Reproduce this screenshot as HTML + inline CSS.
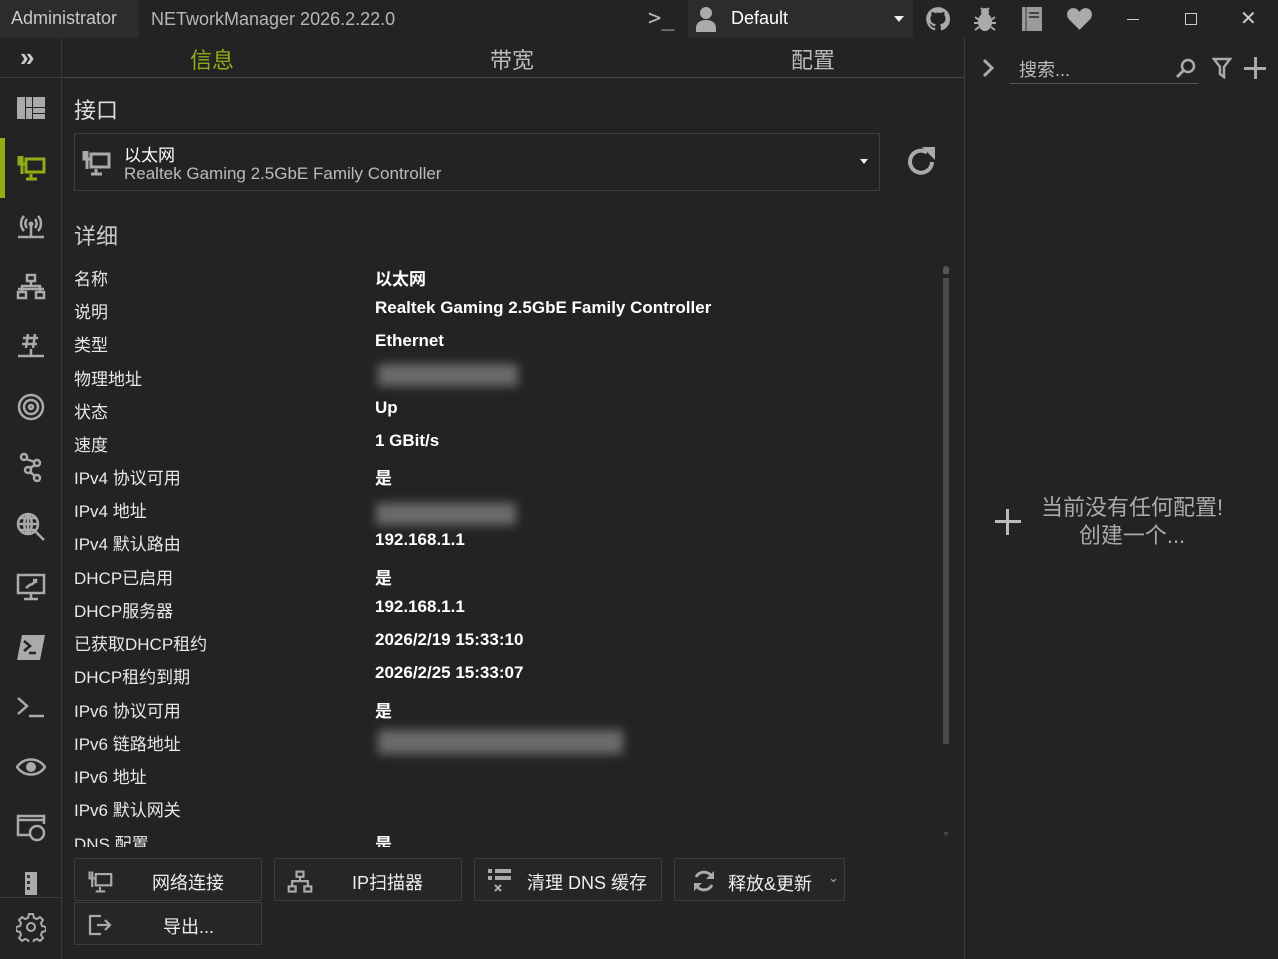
<!DOCTYPE html>
<html><head><meta charset="utf-8"><style>
*{margin:0;padding:0;box-sizing:border-box}
body{width:1278px;height:959px;background:#232323;color:#ddd;font-family:"Liberation Sans","Noto Sans CJK SC",sans-serif;position:relative;overflow:hidden}
.a{position:absolute}
.t{font-size:18px;color:#c8c8c8}
.lbl{position:absolute;left:74px;font-size:17px;color:#e8e8e8}
.val{position:absolute;left:375px;font-size:17px;color:#fff;font-weight:bold}
.ic{position:absolute;left:16px;width:30px;height:30px}
.btn{position:absolute;border:1px solid #3c3c3c;background:#262626;height:43px;font-size:18px;color:#eee}
.blur{position:absolute;background:#8a8a8a;filter:blur(5px);opacity:.7}
</style></head><body>
<!-- title bar -->
<div class="a" style="left:0;top:0;width:139px;height:38px;background:#2c2c2c"></div>
<div class="a t" style="left:11px;top:8px;color:#c8c8c8">Administrator</div>
<div class="a t" style="left:151px;top:9px;color:#b8b8b8">NETworkManager 2026.2.22.0</div>
<div class="a t" style="left:648px;top:6px;font-size:22px;color:#bbb;font-family:'DejaVu Sans Mono'">&gt;_</div>
<div class="a" style="left:688px;top:0;width:225px;height:38px;background:#2c2c2c"></div>
<svg class="a" style="left:694px;top:4px" width="24" height="28" viewBox="0 0 24 28"><circle cx="12" cy="9" r="6" fill="#aaa"/><path d="M2 28v-4c0-5 4-8 10-8s10 3 10 8v4z" fill="#aaa"/></svg>
<div class="a t" style="left:731px;top:8px;color:#fff;font-size:18px">Default</div>
<div class="a" style="left:894px;top:16px;border-left:5px solid transparent;border-right:5px solid transparent;border-top:6px solid #eee"></div>
<svg class="a" style="left:925px;top:6px" width="26" height="26" viewBox="0 0 24 24"><path fill="#aaa" d="M12 1a11 11 0 0 0-3.5 21.4c.6.1.8-.2.8-.5v-2c-3.1.7-3.7-1.4-3.7-1.4-.5-1.3-1.2-1.6-1.2-1.6-1-.7.1-.7.1-.7 1.1.1 1.7 1.1 1.7 1.1 1 1.7 2.6 1.2 3.2.9.1-.7.4-1.2.7-1.5-2.5-.3-5.1-1.2-5.1-5.4 0-1.2.4-2.2 1.1-3-.1-.3-.5-1.4.1-2.9 0 0 .9-.3 3 1.1a10 10 0 0 1 5.5 0c2.1-1.4 3-1.1 3-1.1.6 1.5.2 2.6.1 2.9.7.8 1.1 1.8 1.1 3 0 4.2-2.6 5.1-5.1 5.4.4.4.8 1.1.8 2.1v3.2c0 .3.2.6.8.5A11 11 0 0 0 12 1z"/></svg>
<svg class="a" style="left:972px;top:5px" width="26" height="28" viewBox="0 0 26 28"><ellipse cx="13" cy="17" rx="7" ry="9" fill="#aaa"/><circle cx="13" cy="7" r="4" fill="#aaa"/><path d="M3 12l4 3M23 12l-4 3M2 18h5M24 18h-5M3 25l4-3M23 25l-4-3M9 3l2 2M17 3l-2 2" stroke="#aaa" stroke-width="2"/></svg>
<svg class="a" style="left:1021px;top:6px" width="22" height="26" viewBox="0 0 22 26"><rect x="1" y="1" width="20" height="24" fill="#9a9a9a"/><rect x="4" y="1" width="2" height="24" fill="#6a6a6a"/><rect x="8" y="6" width="10" height="2" fill="#444"/><rect x="8" y="10" width="10" height="2" fill="#444"/></svg>
<svg class="a" style="left:1066px;top:7px" width="27" height="24" viewBox="0 0 24 22"><path fill="#aaa" d="M12 21 2 11C-1 7 1 1 6.5 1 9 1 11 3 12 4.5 13 3 15 1 17.5 1 23 1 25 7 22 11z"/></svg>
<div class="a" style="left:1127px;top:19px;width:12px;height:1px;background:#ccc"></div>
<div class="a" style="left:1185px;top:13px;width:12px;height:12px;border:1px solid #ccc"></div>
<div class="a" style="left:1240px;top:6px;font-size:20px;color:#ccc">✕</div>

<!-- sidebar -->
<div class="a" style="left:61px;top:38px;width:1px;height:921px;background:#3a3a3a"></div>
<div class="a" style="left:0;top:77px;width:61px;height:1px;background:#3a3a3a"></div>
<div class="a" style="left:20px;top:42px;font-size:26px;color:#ccc;font-weight:bold;letter-spacing:-4px">»</div>
<div class="a" style="left:0;top:138px;width:5px;height:60px;background:#8fad15"></div>
<svg class="ic" style="top:93px" viewBox="0 0 30 30"><g fill="#aaa"><rect x="1" y="4" width="8" height="22"/><rect x="10" y="4" width="6" height="10"/><rect x="10" y="15" width="6" height="11"/><rect x="17" y="4" width="12" height="10"/><rect x="17" y="15" width="12" height="5"/><rect x="17" y="21" width="12" height="5"/></g></svg>
<svg class="ic" style="top:152px" viewBox="0 0 30 30"><g fill="none" stroke="#8fad15" stroke-width="3"><rect x="10" y="7" width="18" height="13"/><path d="M3 4v8h6M6 4v8M6 12v10M15 22v4M10 27h11"/></g></svg>
<svg class="ic" style="top:212px" viewBox="0 0 30 30"><g fill="none" stroke="#aaa" stroke-width="2.5"><path d="M8 4a11 11 0 0 0 0 15M22 4a11 11 0 0 1 0 15M11 7a7 7 0 0 0 0 9M19 7a7 7 0 0 1 0 9M15 13v12M2 25h26"/></g><circle cx="15" cy="12" r="2.5" fill="#aaa"/></svg>
<svg class="ic" style="top:272px" viewBox="0 0 30 30"><g fill="none" stroke="#aaa" stroke-width="2.5"><rect x="11" y="3" width="8" height="6"/><rect x="2" y="20" width="8" height="6"/><rect x="20" y="20" width="8" height="6"/><path d="M15 9v5M6 20v-6h18v6M2 17h26"/></g></svg>
<svg class="ic" style="top:332px" viewBox="0 0 30 30"><g fill="none" stroke="#aaa" stroke-width="2.5"><path d="M12 2l-2 14M19 2l-2 14M7 6h15M6 12h15M15 17v6M2 24h26"/></g></svg>
<svg class="ic" style="top:392px" viewBox="0 0 30 30"><g fill="none" stroke="#aaa" stroke-width="2.5"><circle cx="15" cy="15" r="12"/><circle cx="15" cy="15" r="7"/><circle cx="15" cy="15" r="2"/></g></svg>
<svg class="ic" style="top:452px" viewBox="0 0 30 30"><g fill="none" stroke="#aaa" stroke-width="2.5"><circle cx="8" cy="5" r="3"/><circle cx="21" cy="11" r="3"/><circle cx="12" cy="18" r="3"/><circle cx="21" cy="26" r="3"/><path d="M10 7l9 3M19 13l-5 3M14 20l5 4"/></g></svg>
<svg class="ic" style="top:512px" viewBox="0 0 30 30"><g fill="none" stroke="#aaa" stroke-width="2.5"><circle cx="12" cy="12" r="10"/><path d="M2 12h20M12 2v20M5 6h14M5 18h14M12 2c-5 5-5 15 0 20M12 2c5 5 5 15 0 20M19 19l9 9"/></g></svg>
<svg class="ic" style="top:572px" viewBox="0 0 30 30"><g fill="none" stroke="#aaa" stroke-width="2.5"><rect x="2" y="3" width="26" height="18"/><path d="M15 21v5M8 27h14M10 16l5-4M20 9l-5 4M17 8h3v3"/></g></svg>
<svg class="ic" style="top:632px" viewBox="0 0 30 30"><path d="M6 3h23l-5 25H1z" fill="#aaa"/><path d="M8 9l6 5-6 5M13 21h7" stroke="#222" stroke-width="2.5" fill="none"/></svg>
<svg class="ic" style="top:692px" viewBox="0 0 30 30"><path d="M2 6l9 8-9 8M13 24h15" stroke="#aaa" stroke-width="2.5" fill="none"/></svg>
<svg class="ic" style="top:752px" viewBox="0 0 30 30"><path d="M1 15c7-10 21-10 28 0-7 10-21 10-28 0z" stroke="#aaa" stroke-width="2.5" fill="none"/><circle cx="15" cy="15" r="5" fill="#aaa"/></svg>
<svg class="ic" style="top:812px" viewBox="0 0 30 30"><g fill="none" stroke="#aaa" stroke-width="2.5"><path d="M14 23H2V4h26v8M2 8h26"/><circle cx="21" cy="21" r="7"/></g></svg>
<svg class="ic" style="top:868px" viewBox="0 0 30 30"><rect x="9" y="4" width="12" height="23" fill="#aaa"/><g fill="#333"><rect x="11" y="7" width="3" height="3"/><rect x="11" y="13" width="3" height="3"/><rect x="11" y="19" width="3" height="3"/></g></svg>
<div class="a" style="left:0;top:897px;width:61px;height:1px;background:#3a3a3a"></div>
<svg class="ic" style="top:912px" viewBox="0 0 30 30"><g fill="none" stroke="#aaa" stroke-width="2"><path d="M13 2h4l1 4 3 1 3-2 3 3-2 3 1 3 4 1v4l-4 1-1 3 2 3-3 3-3-2-3 1-1 4h-4l-1-4-3-1-3 2-3-3 2-3-1-3-4-1v-4l4-1 1-3-2-3 3-3 3 2 3-1z"/><circle cx="15" cy="15" r="4"/></g></svg>

<!-- tabs -->
<div class="a" style="left:62px;top:77px;width:902px;height:1px;background:#444"></div>
<div class="a" style="left:190px;top:43px;font-size:22px;color:#8fad15">信息</div>
<div class="a" style="left:490px;top:43px;font-size:22px;color:#bbb">带宽</div>
<div class="a" style="left:791px;top:43px;font-size:22px;color:#bbb">配置</div>

<div class="a" style="left:74px;top:93px;font-size:22px;color:#ddd">接口</div>
<div class="a" style="left:74px;top:133px;width:806px;height:58px;border:1px solid #3e3e3e"></div>
<svg class="a" style="left:81px;top:147px" width="30" height="30" viewBox="0 0 30 30"><g fill="none" stroke="#aaa" stroke-width="3"><rect x="10" y="7" width="18" height="13"/><path d="M3 4v8h6M6 4v8M6 12v10M15 22v4M10 27h11"/></g></svg>
<div class="a" style="left:124px;top:141px;font-size:17px;color:#fff">以太网</div>
<div class="a" style="left:124px;top:164px;font-size:17px;color:#bbb">Realtek Gaming 2.5GbE Family Controller</div>
<div class="a" style="left:860px;top:159px;border-left:4px solid transparent;border-right:4px solid transparent;border-top:5px solid #eee"></div>
<svg class="a" style="left:905px;top:145px" width="34" height="34" viewBox="0 0 34 34"><path d="M27 17A11 11 0 1 1 22 7.5" fill="none" stroke="#aaa" stroke-width="4"/><path d="M17 2h13v13z" fill="#aaa"/></svg>

<div class="a" style="left:74px;top:219px;font-size:22px;color:#ccc">详细</div>
<div class="lbl" style="top:265px">名称</div><div class="val" style="top:265px">以太网</div>
<div class="lbl" style="top:298px">说明</div><div class="val" style="top:298px">Realtek Gaming 2.5GbE Family Controller</div>
<div class="lbl" style="top:331px">类型</div><div class="val" style="top:331px">Ethernet</div>
<div class="lbl" style="top:365px">物理地址</div><div class="blur" style="left:378px;top:364px;width:140px;height:22px"></div>
<div class="lbl" style="top:398px">状态</div><div class="val" style="top:398px">Up</div>
<div class="lbl" style="top:431px">速度</div><div class="val" style="top:431px">1 GBit/s</div>
<div class="lbl" style="top:464px">IPv4 协议可用</div><div class="val" style="top:464px">是</div>
<div class="lbl" style="top:497px">IPv4 地址</div><div class="blur" style="left:376px;top:503px;width:140px;height:22px"></div>
<div class="lbl" style="top:530px">IPv4 默认路由</div><div class="val" style="top:530px">192.168.1.1</div>
<div class="lbl" style="top:564px">DHCP已启用</div><div class="val" style="top:564px">是</div>
<div class="lbl" style="top:597px">DHCP服务器</div><div class="val" style="top:597px">192.168.1.1</div>
<div class="lbl" style="top:630px">已获取DHCP租约</div><div class="val" style="top:630px">2026/2/19 15:33:10</div>
<div class="lbl" style="top:663px">DHCP租约到期</div><div class="val" style="top:663px">2026/2/25 15:33:07</div>
<div class="lbl" style="top:697px">IPv6 协议可用</div><div class="val" style="top:697px">是</div>
<div class="lbl" style="top:730px">IPv6 链路地址</div><div class="blur" style="left:378px;top:730px;width:245px;height:24px"></div>
<div class="lbl" style="top:763px">IPv6 地址</div>
<div class="lbl" style="top:796px">IPv6 默认网关</div>
<div class="a" style="left:62px;top:829px;width:880px;height:18px;overflow:hidden"><div class="lbl" style="top:1px;left:12px">DNS 配置</div><div class="val" style="top:1px;left:313px">是</div></div>
<!-- scrollbar -->
<div class="a" style="left:943px;top:266px;width:6px;height:8px;border-radius:3px 3px 0 0;background:#555"></div>
<div class="a" style="left:943px;top:278px;width:6px;height:466px;background:#4a4a4a"></div>
<div class="a" style="left:943px;top:832px;border-left:3px solid transparent;border-right:3px solid transparent;border-top:5px solid #444"></div>

<!-- buttons -->
<div class="btn" style="left:74px;top:858px;width:188px"><svg class="a" style="left:12px;top:9px" width="26" height="26" viewBox="0 0 30 30"><g fill="none" stroke="#aaa" stroke-width="2.5"><rect x="10" y="7" width="18" height="13"/><path d="M3 4v8h6M6 4v8M6 12v10M15 22v4M10 27h11"/></g></svg><span class="a" style="left:77px;top:10px">网络连接</span></div>
<div class="btn" style="left:74px;top:902px;width:188px"><svg class="a" style="left:12px;top:10px" width="26" height="24" viewBox="0 0 26 24"><path d="M14 3H3v18h11M10 12h13M18 7l5 5-5 5" fill="none" stroke="#aaa" stroke-width="2.2"/></svg><span class="a" style="left:88px;top:10px">导出...</span></div>
<div class="btn" style="left:274px;top:858px;width:188px"><svg class="a" style="left:12px;top:10px" width="26" height="26" viewBox="0 0 30 30"><g fill="none" stroke="#aaa" stroke-width="2.5"><rect x="11" y="3" width="8" height="6"/><rect x="2" y="20" width="8" height="6"/><rect x="20" y="20" width="8" height="6"/><path d="M15 9v5M6 20v-6h18v6"/></g></svg><span class="a" style="left:77px;top:10px">IP扫描器</span></div>
<div class="btn" style="left:474px;top:858px;width:188px"><svg class="a" style="left:12px;top:8px" width="26" height="28" viewBox="0 0 26 28"><g fill="#aaa"><rect x="1" y="2" width="4" height="4"/><rect x="8" y="2" width="16" height="4"/><rect x="1" y="9" width="4" height="4"/><rect x="8" y="9" width="16" height="4"/></g><path d="M8 18l6 6M14 18l-6 6" stroke="#aaa" stroke-width="2"/></svg><span class="a" style="left:52px;top:10px">清理 DNS 缓存</span></div>
<div class="btn" style="left:674px;top:858px;width:171px"><svg class="a" style="left:16px;top:9px" width="26" height="26" viewBox="0 0 26 26"><path d="M21 9A9 9 0 0 0 5 9M5 17a9 9 0 0 0 16 0" fill="none" stroke="#aaa" stroke-width="3"/><path d="M23 3v8h-8zM3 23v-8h8z" fill="#aaa"/></svg><span class="a" style="left:53px;top:11px">释放&amp;更新</span><span class="a" style="left:153px;top:11px;font-size:13px;color:#aaa">⌄</span></div>

<!-- right panel -->
<div class="a" style="left:964px;top:38px;width:1px;height:921px;background:#3a3a3a"></div>
<svg class="a" style="left:980px;top:57px" width="16" height="22" viewBox="0 0 16 22"><path d="M4 3l8 8-8 8" fill="none" stroke="#aaa" stroke-width="3"/></svg>
<div class="a" style="left:1019px;top:56px;font-size:18px;color:#bbb">搜索...</div>
<div class="a" style="left:1010px;top:83px;width:188px;height:1px;background:#555"></div>
<svg class="a" style="left:1174px;top:56px" width="24" height="24" viewBox="0 0 24 24"><circle cx="14" cy="10" r="6" fill="none" stroke="#aaa" stroke-width="2.5"/><path d="M10 14l-7 7" stroke="#aaa" stroke-width="3"/></svg>
<svg class="a" style="left:1212px;top:57px" width="20" height="22" viewBox="0 0 20 22"><path d="M2 2h16l-6 8v10l-4-3v-7z" fill="none" stroke="#aaa" stroke-width="2.5"/></svg>
<div class="a" style="left:1244px;top:67px;width:22px;height:3px;background:#aaa"></div>
<div class="a" style="left:1254px;top:57px;width:3px;height:22px;background:#aaa"></div>
<div class="a" style="left:995px;top:520px;width:26px;height:3px;background:#bbb"></div>
<div class="a" style="left:1006px;top:509px;width:3px;height:26px;background:#bbb"></div>
<div class="a" style="left:1032px;top:494px;width:200px;text-align:center;font-size:22px;color:#aaa;line-height:28px">当前没有任何配置!<br>创建一个...</div>
</body></html>
